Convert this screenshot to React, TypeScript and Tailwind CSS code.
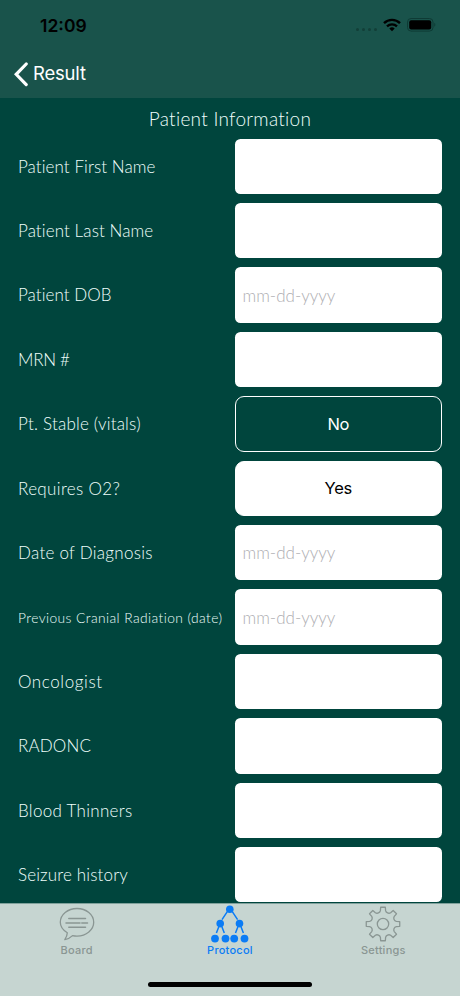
import clsx from 'clsx';
import type { ReactNode } from 'react';

type Field = {
    label: string;
    kind?: 'text' | 'date' | 'toggle';
    value?: 'Yes' | 'No';
    labelClass: string;
};

const fields: Field[] = [
    { label: 'Patient First Name', labelClass: 'text-[17px] tracking-[0.08px]' },
    { label: 'Patient Last Name', labelClass: 'text-[17px] tracking-[0.1px]' },
    { label: 'Patient DOB', kind: 'date', labelClass: 'text-[17px] tracking-[0.05px]' },
    { label: 'MRN #', labelClass: 'text-[17px] tracking-[-0.3px]' },
    {
        label: 'Pt. Stable (vitals)',
        kind: 'toggle',
        value: 'No',
        labelClass: 'text-[17px] tracking-[0.2px]',
    },
    {
        label: 'Requires O2?',
        kind: 'toggle',
        value: 'Yes',
        labelClass: 'text-[17px] tracking-[0.35px]',
    },
    { label: 'Date of Diagnosis', kind: 'date', labelClass: 'text-[17px] tracking-[0.28px]' },
    {
        label: 'Previous Cranial Radiation (date)',
        kind: 'date',
        labelClass: 'pt-[2px] text-[13.8px] tracking-[0.42px]',
    },
    { label: 'Oncologist', labelClass: 'text-[17px] tracking-[0.6px]' },
    { label: 'RADONC', labelClass: 'text-[17px] tracking-[0.15px]' },
    { label: 'Blood Thinners', labelClass: 'text-[17px] tracking-[0.3px]' },
    { label: 'Seizure history', labelClass: 'text-[17px] tracking-[0.15px]' },
];

const StatusBar = () => (
    <div className="flex h-[50px] items-center justify-between pr-[24px] pl-[40px] text-black">
        <span className="pt-[2px] text-[17.5px] font-semibold">12:09</span>
        <div className="flex items-center">
            <div className="mt-[9px] mr-[6px] flex gap-[3px]">
                {[0, 1, 2, 3].map((dot) => (
                    <span key={dot} className="size-[3px] rounded-full bg-[#123f38]" />
                ))}
            </div>
            <svg className="mr-[6px] h-[14px] w-[18px]" viewBox="0 0 18 14" fill="none">
                <path d="M1 5.2a11.4 11.4 0 0 1 16 0" stroke="black" strokeWidth="2.4" />
                <path d="M4 8.3a7.2 7.2 0 0 1 10 0" stroke="black" strokeWidth="2.3" />
                <path d="M9 13.2 6.3 10.6a3.9 3.9 0 0 1 5.4 0Z" fill="black" />
            </svg>
            <svg className="h-[14px] w-[29px]" viewBox="0 0 29 14" fill="none">
                <rect x="0.5" y="0.5" width="25.5" height="12.6" rx="3.6" stroke="#0e3b35" />
                <rect x="2.2" y="2.2" width="22" height="9.2" rx="2" fill="black" />
                <path d="M27.3 4.8c1.4.5 1.4 3.5 0 4Z" fill="#0e3b35" />
            </svg>
        </div>
    </div>
);

const NavBar = () => (
    <header className="h-[98px] shrink-0 bg-[#19534b]">
        <StatusBar />
        <button className="flex h-[48px] items-center pl-[14px] text-white">
            <svg className="mr-[5px] h-[25px] w-[14px]" viewBox="0 0 14 25" fill="none">
                <path
                    d="M12.2 2 2.2 12.3l10 10.3"
                    stroke="currentColor"
                    strokeWidth="3.2"
                    strokeLinecap="round"
                />
            </svg>
            <span className="text-[18.5px] tracking-[-0.2px]">Result</span>
        </button>
    </header>
);

const FieldControl = ({ kind = 'text', value }: Field) => {
    if (kind === 'toggle') {
        return (
            <button
                className={clsx(
                    'h-[55.4px] w-full rounded-[9px] border-[1.3px] border-white pt-px text-[16.5px] tracking-[-0.3px]',
                    value === 'Yes' ? 'bg-white text-black' : 'text-white',
                )}
            >
                {value}
            </button>
        );
    }

    return (
        <input
            className="h-[55.4px] w-full rounded-[5.5px] bg-white px-[8px] font-['Lato',sans-serif] text-[17px] font-light text-black placeholder:text-[#aeaeb2]"
            placeholder={kind === 'date' ? 'mm-dd-yyyy' : ''}
        />
    );
};

const FieldRow = (field: Field) => (
    <div className="grid h-[55.4px] grid-cols-[216.5px_207.5px] items-center pl-[18px]">
        <label
            className={clsx(
                "font-['Lato',sans-serif] font-light whitespace-nowrap text-[#f0fffc]",
                field.labelClass,
            )}
        >
            {field.label}
        </label>
        <FieldControl {...field} />
    </div>
);

const BoardIcon = () => (
    <svg className="h-[36px] w-[36px]" viewBox="0 0 36 36" fill="none" stroke="currentColor">
        <path
            d="M8.3 26.8C4 24.2 1.3 20.5 1.3 16.3 1.3 8.7 8.7 2.5 18 2.5s16.7 6.2 16.7 13.8S27.3 30.1 18 30.1c-1.6 0-3.1-.2-4.5-.5-2.2 2.2-4.7 3.6-7.7 4 1.5-2 2.4-4.2 2.5-6.8Z"
            strokeWidth="1.3"
            strokeLinejoin="round"
        />
        <path
            d="M9.8 12.5h16.7M7 16.9h14M22.8 16.9h5.7M9.8 21.3h16.7"
            strokeWidth="1.5"
            strokeLinecap="round"
        />
    </svg>
);

const ProtocolIcon = () => (
    <svg className="h-[40px] w-[40px]" viewBox="0 0 40 40" fill="currentColor">
        <path
            d="m17.3 7.6-5.3 8M22.3 7.6l5.3 8M9 22.3l-2.6 6.7M11.7 22.3l2.6 6.7M28.1 22.3l-2.6 6.7M30.8 22.3l2.6 6.7"
            stroke="currentColor"
            strokeWidth="1.5"
        />
        <circle cx="19.8" cy="5.2" r="3.8" />
        <circle cx="10.2" cy="19.6" r="3.8" />
        <circle cx="29.5" cy="19.6" r="3.8" />
        <circle cx="5" cy="34.6" r="3.9" />
        <circle cx="15.5" cy="34.6" r="3.9" />
        <circle cx="24.2" cy="34.6" r="3.9" />
        <circle cx="34.5" cy="34.6" r="3.9" />
    </svg>
);

const polar = (radius: number, degrees: number) => {
    const a = ((degrees - 90) * Math.PI) / 180;
    return `${(18 + radius * Math.cos(a)).toFixed(2)} ${(18 + radius * Math.sin(a)).toFixed(2)}`;
};

// eight teeth with rounded valleys between them
const gearPath =
    [0, 45, 90, 135, 180, 225, 270, 315]
        .map((deg, i) => {
            const start = `${i === 0 ? 'M' : 'L'}${polar(16.9, deg - 8)}`;
            return `${start}L${polar(16.9, deg + 8)}L${polar(13.6, deg + 11)}C${polar(11.6, deg + 15)} ${polar(11.6, deg + 30)} ${polar(13.6, deg + 34)}`;
        })
        .join('') + 'Z';

const SettingsIcon = () => (
    <svg
        className="h-[36px] w-[36px]"
        viewBox="0 0 36 36"
        fill="none"
        stroke="currentColor"
        strokeWidth="1.3"
    >
        <path d={gearPath} strokeLinejoin="round" />
        <circle cx="18" cy="18" r="5.7" />
    </svg>
);

type TabProps = { icon: ReactNode; label: string; active?: boolean };

const Tab = ({ icon, label, active }: TabProps) => (
    <button
        className={clsx('flex flex-col items-center', active ? 'text-[#0b7cf5]' : 'text-[#8a9693]')}
    >
        <span className="flex h-[40px] items-center justify-center">{icon}</span>
        <span className="text-[11px] leading-[13px] font-medium tracking-[0.25px]">{label}</span>
    </button>
);

const TabBar = () => (
    <nav className="flex h-[93px] shrink-0 flex-col border-t border-[#7fa19b] bg-[#c6d5d1]">
        <div className="grid grid-cols-3">
            <Tab icon={<BoardIcon />} label="Board" />
            <Tab icon={<ProtocolIcon />} label="Protocol" active />
            <Tab icon={<SettingsIcon />} label="Settings" />
        </div>
        <div className="mx-auto mt-auto mb-[9px] h-[5.5px] w-[164px] rounded-full bg-black" />
    </nav>
);

export default function App() {
    return (
        <div className="flex h-[996px] w-[460px] flex-col overflow-hidden bg-[#00453d] font-['Inter',sans-serif]">
            <NavBar />
            <main className="min-h-0 flex-1 overflow-hidden">
                <h1 className="h-[40.7px] pt-[7px] text-center font-['Lato',sans-serif] text-[19px] leading-[28px] font-light tracking-[0.28px] text-[#f0fffc]">
                    Patient Information
                </h1>
                <div className="flex flex-col gap-[9px]">
                    {fields.map((field) => (
                        <FieldRow key={field.label} {...field} />
                    ))}
                </div>
            </main>
            <TabBar />
        </div>
    );
}
